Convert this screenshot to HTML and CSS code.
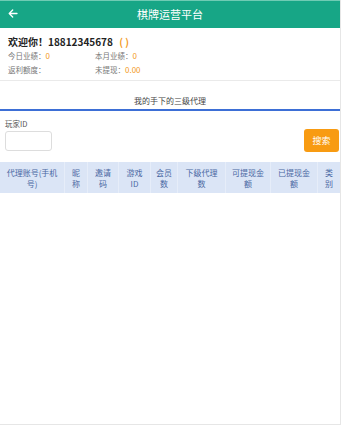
FILE: index.html
```html
<!DOCTYPE html>
<html lang="zh">
<head>
<meta charset="utf-8">
<title>棋牌运营平台</title>
<link rel="stylesheet" href="styles.css">
</head>
<body>
<div class="page">
  <header class="topbar">
    <span class="back">
      <svg width="10" height="9" viewBox="0 0 10 9"><path d="M9 4.5H1.2M4.7 1L1.2 4.5l3.5 3.5" fill="none" stroke="#fff" stroke-width="1.3" stroke-linecap="round" stroke-linejoin="round"/></svg>
    </span>
    <h1 class="title">棋牌运营平台</h1>
  </header>
  <section class="info">
    <div class="welcome">欢迎你！18812345678 <span class="paren">( )</span></div>
    <div class="stats">
      <div class="stat">今日业绩：<span class="val">0</span></div>
      <div class="stat">本月业绩：<span class="val">0</span></div>
      <div class="stat">返利额度：</div>
      <div class="stat">未提现：<span class="val">0.00</span></div>
    </div>
  </section>
  <div class="tab">我的手下的三级代理</div>
  <section class="search">
    <div class="field">
      <label class="label">玩家ID</label>
      <input class="input" type="text">
    </div>
    <button class="btn">搜索</button>
  </section>
  <div class="table">
    <div class="th c1">代理账号(手机号)</div>
    <div class="th c2">昵称</div>
    <div class="th c3">邀请码</div>
    <div class="th c4">游戏ID</div>
    <div class="th c5">会员数</div>
    <div class="th c6">下级代理数</div>
    <div class="th c7">可提现金额</div>
    <div class="th c8">已提现金额</div>
    <div class="th c9">类别</div>
  </div>
</div>
</body>
</html>
```
FILE: styles.css
```css
html, body {
  margin: 0;
  padding: 0;
  background: #fff;
}
body {
  font-family: "Noto Sans CJK SC", "Noto Sans", sans-serif;
  color: #333;
}
.page {
  width: 340px;
  height: 424px;
  border-right: 1px solid #e6e6e6;
  border-bottom: 1px solid #e6e6e6;
  display: flex;
  flex-direction: column;
}
.topbar {
  height: 28px;
  flex: none;
  background: #17a686;
  display: flex;
  align-items: center;
  position: relative;
  border-top: 1px solid #6fcbb4;
  box-sizing: border-box;
}
.back {
  position: absolute;
  left: 8px;
  top: 8px;
  width: 10px;
  height: 9px;
  display: flex;
}
.title {
  margin: 0;
  flex: 1;
  text-align: center;
  color: #fff;
  font-size: 11px;
  font-weight: normal;
  line-height: 27px;
}
.info {
  flex: none;
  box-sizing: border-box;
  height: 53px;
  padding: 7px 8px 0;
  border-bottom: 1px solid #eaeaea;
}
.welcome {
  font-size: 10px;
  font-weight: bold;
  color: #222;
  line-height: 14px;
}
.paren {
  color: #f39a1e;
  margin-left: 4px;
}
.stats {
  display: grid;
  grid-template-columns: 87px 1fr;
}
.stat {
  font-size: 7.5px;
  color: #777;
  line-height: 14px;
}
.val {
  color: #f39a1e;
  font-size: 8px;
}
.tab {
  flex: none;
  padding: 14px 0 2px;
  line-height: 12px;
  border-bottom: 2px solid #3d6fd6;
  text-align: center;
  font-size: 8px;
  color: #444;
}
.search {
  flex: none;
  display: flex;
  justify-content: space-between;
  align-items: flex-end;
  padding: 8px 1px 0 5px;
}
.field {
  display: flex;
  flex-direction: column;
}
.label {
  font-size: 7.5px;
  color: #555;
  line-height: 10px;
  margin-bottom: 2px;
}
.input {
  width: 47px;
  height: 20px;
  box-sizing: border-box;
  border: 1px solid #ddd;
  border-radius: 3px;
  padding: 0;
  margin: 0 0 1px;
}
.btn {
  width: 35px;
  height: 23px;
  background: #f89b12;
  border: 0;
  border-radius: 3px;
  color: #fff;
  font-family: inherit;
  font-size: 9px;
  padding: 0;
  margin: 0;
}
.table {
  flex: none;
  margin-top: 10px;
  display: grid;
  grid-template-columns: 64px 23px 31px 32px 27px 48px 45px 47px 23px;
  background: #dbe5f6;
  height: 31px;
}
.th {
  display: flex;
  align-items: center;
  justify-content: center;
  text-align: center;
  font-size: 8px;
  line-height: 11px;
  color: #4a68a3;
  border-left: 1px solid #e6edf9;
  padding: 0 5px;
}
.c1 { border-left: 0; }
```
